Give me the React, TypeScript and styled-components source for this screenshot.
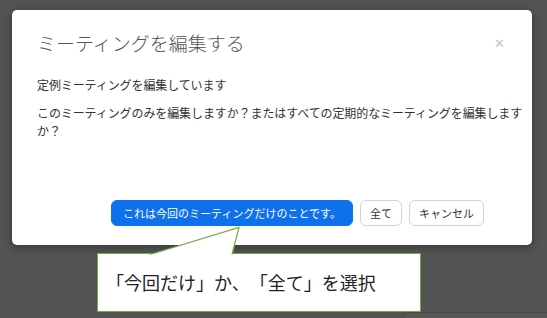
import React from "react";
import styled, { createGlobalStyle } from "styled-components";

const GlobalStyle = createGlobalStyle`
  html, body {
    margin: 0;
    padding: 0;
    background: #535353;
  }
  body {
    font-family: "Noto Sans CJK JP", "Noto Sans", sans-serif;
    text-spacing-trim: space-all;
  }
`;

const Page = styled.div`
  position: relative;
  width: 547px;
  height: 318px;
  display: flex;
  flex-direction: column;
  overflow: hidden;
`;

const Modal = styled.div`
  margin: 10px 0 0 12px;
  width: 520px;
  height: 235px;
  background: #fff;
  border-radius: 5px;
  box-shadow: 0 2px 8px rgba(0, 0, 0, 0.35);
  display: flex;
  flex-direction: column;
  box-sizing: border-box;
`;

const Header = styled.div`
  display: flex;
  align-items: center;
  justify-content: space-between;
  padding: 20px 27px 0 25px;
`;

const Title = styled.h2`
  margin: 0;
  font-size: 19px;
  line-height: 26px;
  font-weight: 300;
  color: #555;
`;

const Close = styled.span`
  font-size: 13px;
  line-height: 1;
  color: #c4c4c4;
  margin-top: -2px;
`;

const Body = styled.div`
  padding: 20px 3px 0 25px;
`;

const Text = styled.p`
  margin: 0 0 10px;
  width: 491px;
  font-size: 12px;
  letter-spacing: -0.1px;
  line-height: 18px;
  color: #333;
`;

const Footer = styled.div`
  margin-top: auto;
  display: flex;
  justify-content: flex-end;
  gap: 7px;
  padding: 0 48px 19px 0;
`;

const Button = styled.button<{ $primary?: boolean }>`
  height: 26px;
  box-sizing: border-box;
  padding: 0 ${(p) => (p.$primary ? "11px" : "9px")};
  border-radius: 6px;
  font-family: inherit;
  font-size: 11px;
  border: 1px solid ${(p) => (p.$primary ? "#0e71eb" : "#d2d2de")};
  background: ${(p) => (p.$primary ? "#0e71eb" : "#fff")};
  color: ${(p) => (p.$primary ? "#fff" : "#333")};
`;

const Callout = styled.div`
  position: absolute;
  left: 97px;
  top: 253px;
  width: 324px;
  height: 59px;
  box-sizing: border-box;
  border: 1.5px solid #70ad47;
  background: #fff;
  padding: 18px 0 0 8px;
  font-size: 18px;
  line-height: 20px;
  color: #222;
`;

const Tail = styled.svg`
  position: absolute;
  left: -1.5px;
  top: -28px;
`;

const Shelf = styled.div`
  margin: auto 0 0 403px;
  height: 5px;
  border-top: 1px solid #474747;
  border-left: 1px solid #474747;
  border-top-left-radius: 6px;
  background: #585858;
`;

export default function App() {
  return (
    <Page>
      <GlobalStyle />
      <Modal>
        <Header>
          <Title>ミーティングを編集する</Title>
          <Close>✕</Close>
        </Header>
        <Body>
          <Text>定例ミーティングを編集しています</Text>
          <Text>
            このミーティングのみを編集しますか？またはすべての定期的なミーティングを編集しますか？
          </Text>
        </Body>
        <Footer>
          <Button $primary>これは今回のミーティングだけのことです。</Button>
          <Button>全て</Button>
          <Button>キャンセル</Button>
        </Footer>
      </Modal>
      <Shelf />
      <Callout>
        <Tail width="150" height="30" viewBox="0 0 150 30">
          <polygon points="53,28.8 142,1.5 135,28.8" fill="#fff" />
          <polyline
            points="53,28.5 142,1.5 135,28.5"
            fill="none"
            stroke="#70ad47"
            strokeWidth="1.2"
          />
          <rect x="54.5" y="28" width="79.5" height="3" fill="#fff" />
        </Tail>
        「今回だけ」か、「全て」を選択
      </Callout>
    </Page>
  );
}
